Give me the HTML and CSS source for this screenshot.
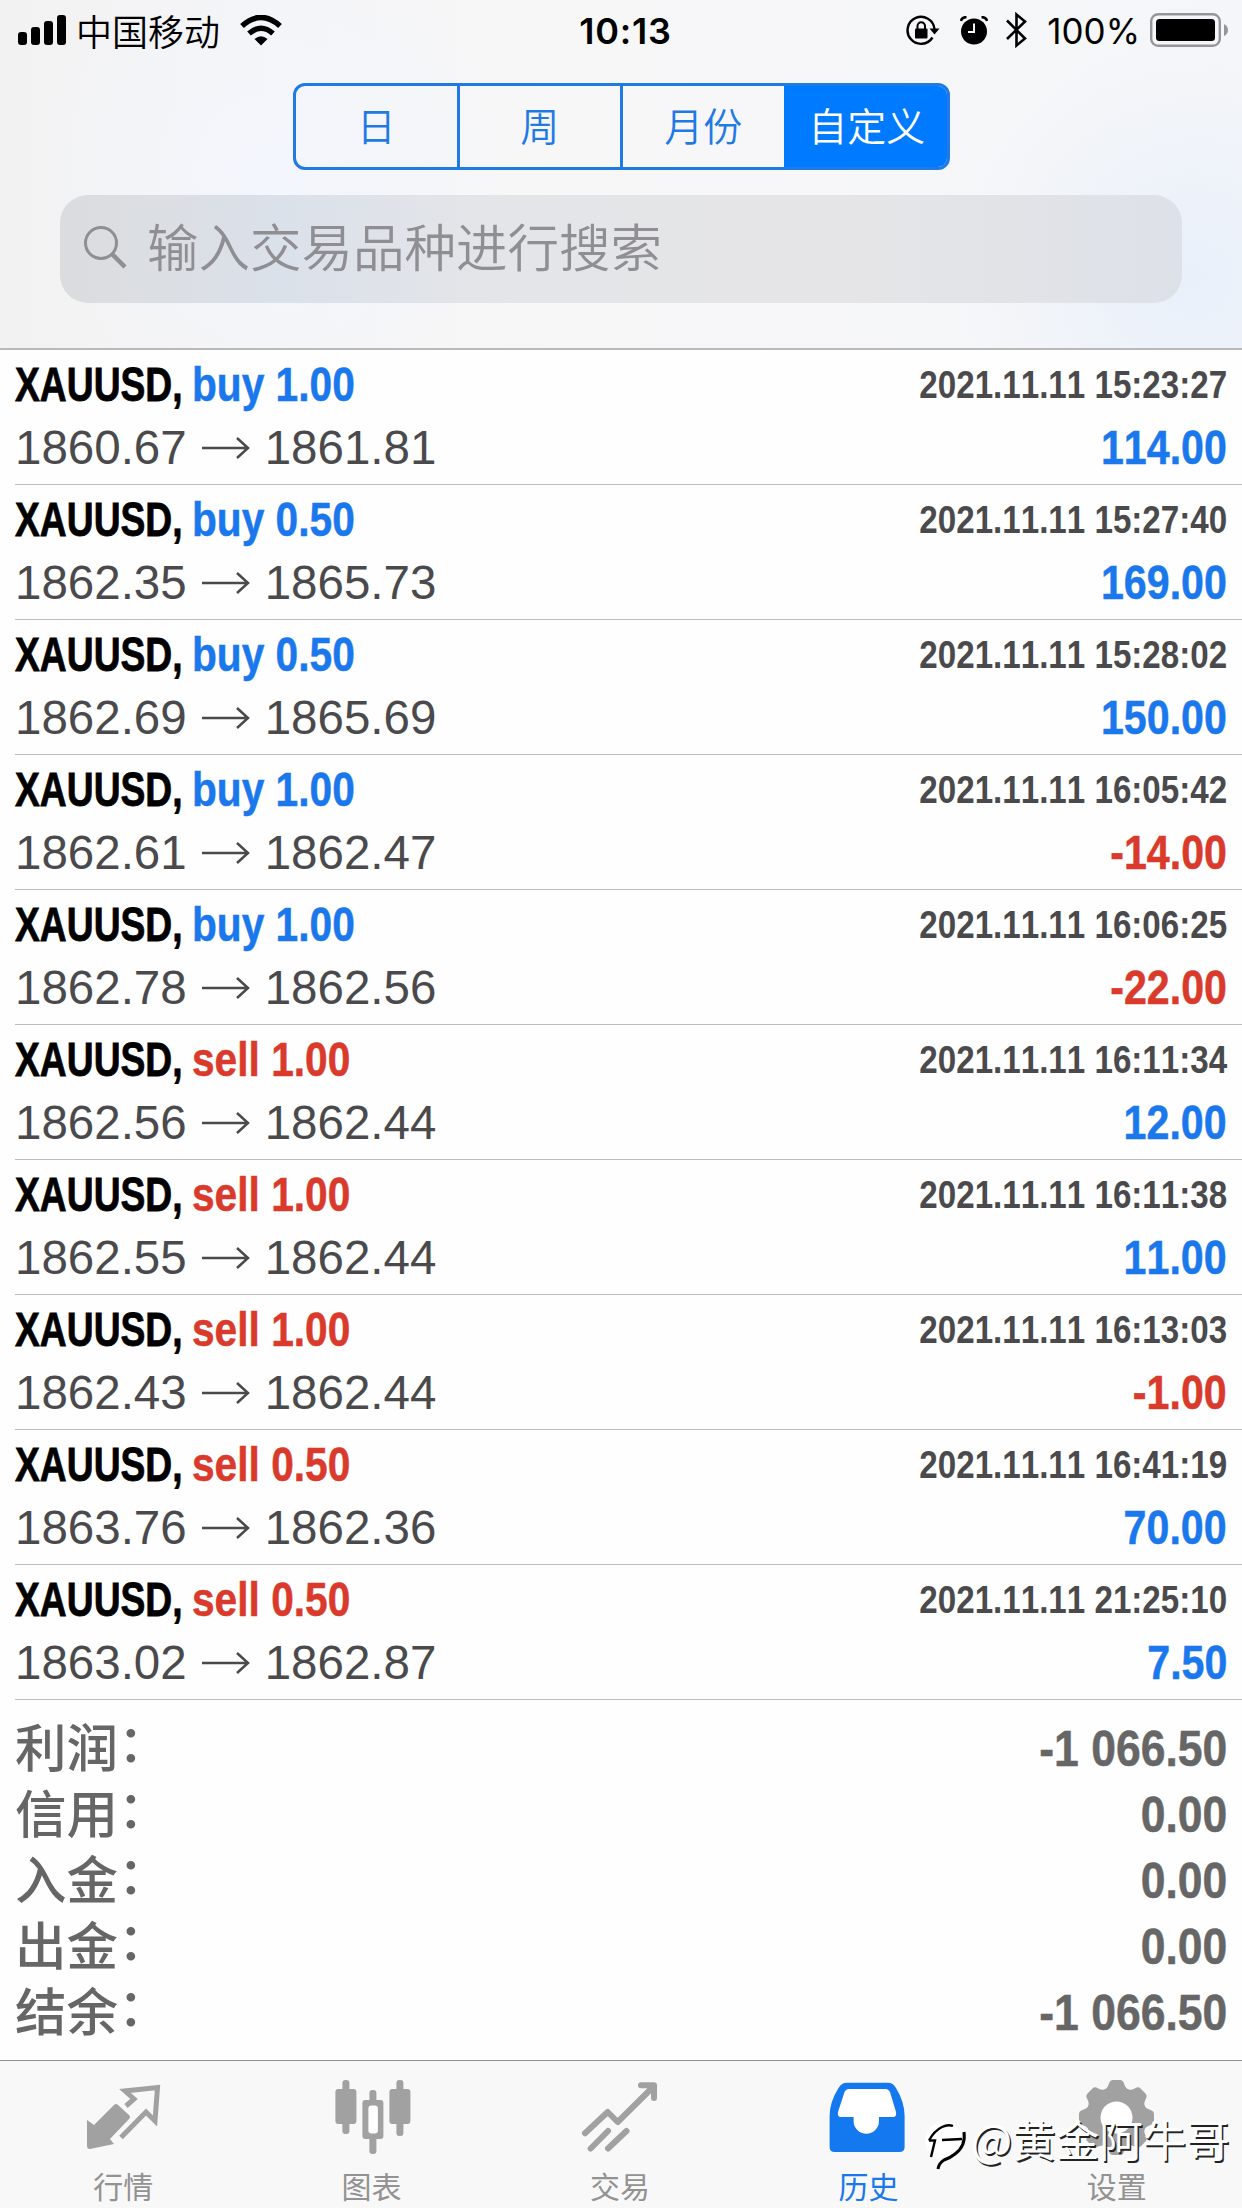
FILE: index.html
```
<!DOCTYPE html>
<html lang="zh-CN">
<head>
    <meta charset="UTF-8">
    <meta name="viewport" content="width=device-width, initial-scale=1.0">
    <title>历史</title>
    <link rel="stylesheet" href="styles.css">
</head>
<body>

<div class="header">
    <div class="status-bar">
        <div class="status-left">
            <svg class="signal" width="48" height="30" viewBox="0 0 48 30">
                <rect x="0" y="17" width="9" height="13" rx="3"/>
                <rect x="13" y="12" width="9" height="18" rx="3"/>
                <rect x="26" y="6" width="9" height="24" rx="3"/>
                <rect x="39" y="0" width="9" height="30" rx="3"/>
            </svg>
            <span class="carrier">中国移动</span>
            <svg class="wifi" width="42" height="31" viewBox="0 0 42 31">
                <path d="M2 11 Q21 -6 40 11" fill="none" stroke="#000" stroke-width="5.5"/>
                <path d="M9 18.5 Q21 8 33 18.5" fill="none" stroke="#000" stroke-width="5.5"/>
                <path d="M14.5 24 Q21 18.5 27.5 24 L21 30.5 Z"/>
            </svg>
        </div>
        <div class="clock">10:13</div>
        <div class="status-right">
            <svg class="lock" width="34" height="31" viewBox="0 0 34 31">
                <path d="M26.5 22.5 A13.5 13.5 0 1 1 28.5 14" fill="none" stroke="#000" stroke-width="2.4"/>
                <path d="M23.5 13.5 H33.5 L28.5 19.5 Z"/>
                <rect x="9" y="13.5" width="12.5" height="10" rx="1"/>
                <path d="M11.5 14 V11 A3.7 3.7 0 0 1 19 11 V14" fill="none" stroke="#000" stroke-width="2"/>
            </svg>
            <svg class="alarm" width="28" height="29" viewBox="0 0 28 29">
                <circle cx="14" cy="15.5" r="13"/>
                <path d="M1 5 Q2 1 6.5 1.2 M27 5 Q26 1 21.5 1.2" fill="none" stroke="#000" stroke-width="2.6"/>
                <path d="M14 7.5 V16 H8" fill="none" stroke="#f7f7f8" stroke-width="2"/>
            </svg>
            <svg class="bluetooth" width="22" height="36" viewBox="0 0 22 36">
                <path d="M1 8.5 L19 26.5 L10.5 33.5 V2.5 L19 9.5 L1 27" fill="none" stroke="#000" stroke-width="2.6"/>
            </svg>
            <span class="percent">100%</span>
            <svg class="battery" width="79" height="34" viewBox="0 0 79 34">
                <rect x="1.2" y="1.2" width="68.6" height="31.6" rx="7" fill="none" stroke="#96969a" stroke-width="2.4"/>
                <rect x="6" y="6" width="59" height="22" rx="3.5"/>
                <path d="M74 11 Q78 13 78 17 T74 23 Z" fill="#96969a"/>
            </svg>
        </div>
    </div>

    <div class="segments">
        <div class="segment">日</div>
        <div class="segment">周</div>
        <div class="segment">月份</div>
        <div class="segment active">自定义</div>
    </div>

    <div class="search">
        <svg width="44" height="44" viewBox="0 0 44 44" fill="none" stroke="#8e8e93">
            <circle cx="17" cy="17" r="15.5" stroke-width="3"/>
            <path d="M28.5 28.5 L41 41" stroke-width="4.5"/>
        </svg>
        <span>输入交易品种进行搜索</span>
    </div>
</div>

<div class="deals">
    <div class="deal">
        <div class="line"><span class="symbol">XAUUSD,</span><span class="type blue">buy 1.00</span><span class="date">2021.11.11 15:23:27</span></div>
        <div class="line"><span class="price">1860.67</span><svg class="arrow" viewBox="0 0 48 22"><path d="M0 11 H45 M35 1 L46 11 L35 21"/></svg><span class="price">1861.81</span><span class="profit blue">114.00</span></div>
    </div>
    <div class="deal">
        <div class="line"><span class="symbol">XAUUSD,</span><span class="type blue">buy 0.50</span><span class="date">2021.11.11 15:27:40</span></div>
        <div class="line"><span class="price">1862.35</span><svg class="arrow" viewBox="0 0 48 22"><path d="M0 11 H45 M35 1 L46 11 L35 21"/></svg><span class="price">1865.73</span><span class="profit blue">169.00</span></div>
    </div>
    <div class="deal">
        <div class="line"><span class="symbol">XAUUSD,</span><span class="type blue">buy 0.50</span><span class="date">2021.11.11 15:28:02</span></div>
        <div class="line"><span class="price">1862.69</span><svg class="arrow" viewBox="0 0 48 22"><path d="M0 11 H45 M35 1 L46 11 L35 21"/></svg><span class="price">1865.69</span><span class="profit blue">150.00</span></div>
    </div>
    <div class="deal">
        <div class="line"><span class="symbol">XAUUSD,</span><span class="type blue">buy 1.00</span><span class="date">2021.11.11 16:05:42</span></div>
        <div class="line"><span class="price">1862.61</span><svg class="arrow" viewBox="0 0 48 22"><path d="M0 11 H45 M35 1 L46 11 L35 21"/></svg><span class="price">1862.47</span><span class="profit red">-14.00</span></div>
    </div>
    <div class="deal">
        <div class="line"><span class="symbol">XAUUSD,</span><span class="type blue">buy 1.00</span><span class="date">2021.11.11 16:06:25</span></div>
        <div class="line"><span class="price">1862.78</span><svg class="arrow" viewBox="0 0 48 22"><path d="M0 11 H45 M35 1 L46 11 L35 21"/></svg><span class="price">1862.56</span><span class="profit red">-22.00</span></div>
    </div>
    <div class="deal">
        <div class="line"><span class="symbol">XAUUSD,</span><span class="type red">sell 1.00</span><span class="date">2021.11.11 16:11:34</span></div>
        <div class="line"><span class="price">1862.56</span><svg class="arrow" viewBox="0 0 48 22"><path d="M0 11 H45 M35 1 L46 11 L35 21"/></svg><span class="price">1862.44</span><span class="profit blue">12.00</span></div>
    </div>
    <div class="deal">
        <div class="line"><span class="symbol">XAUUSD,</span><span class="type red">sell 1.00</span><span class="date">2021.11.11 16:11:38</span></div>
        <div class="line"><span class="price">1862.55</span><svg class="arrow" viewBox="0 0 48 22"><path d="M0 11 H45 M35 1 L46 11 L35 21"/></svg><span class="price">1862.44</span><span class="profit blue">11.00</span></div>
    </div>
    <div class="deal">
        <div class="line"><span class="symbol">XAUUSD,</span><span class="type red">sell 1.00</span><span class="date">2021.11.11 16:13:03</span></div>
        <div class="line"><span class="price">1862.43</span><svg class="arrow" viewBox="0 0 48 22"><path d="M0 11 H45 M35 1 L46 11 L35 21"/></svg><span class="price">1862.44</span><span class="profit red">-1.00</span></div>
    </div>
    <div class="deal">
        <div class="line"><span class="symbol">XAUUSD,</span><span class="type red">sell 0.50</span><span class="date">2021.11.11 16:41:19</span></div>
        <div class="line"><span class="price">1863.76</span><svg class="arrow" viewBox="0 0 48 22"><path d="M0 11 H45 M35 1 L46 11 L35 21"/></svg><span class="price">1862.36</span><span class="profit blue">70.00</span></div>
    </div>
    <div class="deal">
        <div class="line"><span class="symbol">XAUUSD,</span><span class="type red">sell 0.50</span><span class="date">2021.11.11 21:25:10</span></div>
        <div class="line"><span class="price">1863.02</span><svg class="arrow" viewBox="0 0 48 22"><path d="M0 11 H45 M35 1 L46 11 L35 21"/></svg><span class="price">1862.87</span><span class="profit blue">7.50</span></div>
    </div>
</div>

<div class="summary">
    <div class="total"><span class="label">利润</span><span class="colon">：</span><span class="value">-1 066.50</span></div>
    <div class="total"><span class="label">信用</span><span class="colon">：</span><span class="value">0.00</span></div>
    <div class="total"><span class="label">入金</span><span class="colon">：</span><span class="value">0.00</span></div>
    <div class="total"><span class="label">出金</span><span class="colon">：</span><span class="value">0.00</span></div>
    <div class="total"><span class="label">结余</span><span class="colon">：</span><span class="value">-1 066.50</span></div>
</div>

<div class="tab-bar">
    <div class="tab">
        <svg width="80" height="80" viewBox="0 0 80 80">
            <path d="M3 42 L10 47 L30 27 Q32 25 34 27 L45 37 Q47 39 45 41 L26 61 L30 66 L6 71 Q3 71 3 68 Z"/>
            <path d="M42 28 L50 21 L41 13 L73.5 9.5 L71 43 L62 34 L37 59.5" fill="none" stroke="#a1a1a1" stroke-width="5"/>
        </svg>
        <span>行情</span>
    </div>
    <div class="tab">
        <svg width="80" height="80" viewBox="0 0 80 80">
            <rect x="9.4" y="2" width="7" height="54" rx="3"/>
            <rect x="2.4" y="11" width="21" height="35" rx="3"/>
            <rect x="36.4" y="12" width="7" height="64" rx="3"/>
            <rect x="29.4" y="22" width="21" height="39" rx="3"/>
            <rect x="35.4" y="27.5" width="9.5" height="28" rx="3" fill="#fff"/>
            <rect x="63.4" y="2" width="7" height="56" rx="3"/>
            <rect x="56.4" y="11" width="21" height="35" rx="3"/>
        </svg>
        <span>图表</span>
    </div>
    <div class="tab">
        <svg width="80" height="80" viewBox="0 0 80 80">
            <g fill="none" stroke="#a1a1a1" stroke-width="6" stroke-linecap="round" stroke-linejoin="round">
                <path d="M4 55.3 L26.7 34 L36.7 44 L73 8 M60 7.3 H73 V20"/>
                <path d="M9.7 70.5 L27 53 M27 70.5 L45.5 53"/>
            </g>
        </svg>
        <span>交易</span>
    </div>
    <div class="tab active">
        <svg width="80" height="80" viewBox="0 0 80 80">
            <path d="M18 4.7 H59 Q64 4.7 67 10 Q75.6 24 75.6 38 V69 Q75.6 74 70.6 74 H5.6 Q.6 74 .6 69 V38 Q.6 24 9.500 10 Q12.500 4.700 18 4.700 Z"/>
            <path d="M20 11 H56.5 Q59.5 11 61 14 L67 34 Q68 39 64 39 H50 V43 A12.7 12.7 0 0 1 24.6 43 V39 H12 Q8 39 9 34 L15.5 14 Q17 11 20 11 Z" fill="#fff"/>
        </svg>
        <span>历史</span>
    </div>
    <div class="tab">
        <svg width="80" height="80" viewBox="0 0 80 80">
            <g transform="translate(38.5 39.5)">
                <circle r="30.5"/>
                <path id="tooth" d="M-13 -27 Q-9 -29 -7.5 -34 Q-6.5 -37.500 -3.500 -37.500 H3.500 Q6.500 -37.500 7.500 -34 Q9 -29 13 -27 Z"/>
                <use href="#tooth" transform="rotate(45)"/>
                <use href="#tooth" transform="rotate(90)"/>
                <use href="#tooth" transform="rotate(135)"/>
                <use href="#tooth" transform="rotate(180)"/>
                <use href="#tooth" transform="rotate(225)"/>
                <use href="#tooth" transform="rotate(270)"/>
                <use href="#tooth" transform="rotate(315)"/>
                <circle r="16" fill="#fff"/>
            </g>
        </svg>
        <span>设置</span>
    </div>
</div>

<div class="watermark">
    <svg width="46" height="52" viewBox="0 0 46 52">
        <circle cx="22" cy="21" r="19" fill="#fff"/>
        <path d="M7 20.5 Q12 11 20 7 Q26 4 31 6 M7 20.5 H13 L9 37 M20 20 L40 19" fill="none" stroke="#000" stroke-width="2.4"/>
        <path d="M42 12 Q44 26 33 34 Q28 38 22 40 Q17 43 16 49" fill="none" stroke="#000" stroke-width="3"/>
    </svg>
    <span>@黄金阿牛哥</span>
</div>

</body>
</html>
```

FILE: styles.css
```
* {
    box-sizing: border-box;
}

body {
    margin: 0;
    width: 1242px;
    height: 2208px;
    background-color: #fefefe;
    font-family: "Liberation Sans", "Noto Sans CJK SC", sans-serif;
    display: flex;
    flex-direction: column;
    overflow: hidden;
    position: relative;
}

svg {
    display: block;
    flex: none;
}

.header {
    height: 350px;
    border-bottom: 2px solid #b9b9bc;
    background: radial-gradient(circle at 96% 80%, #e9f0fa 0, rgba(233, 240, 250, 0) 240px),
                radial-gradient(circle at 22% 50%, #f3f6fd 0, rgba(243, 246, 253, 0) 240px),
                linear-gradient(90deg, #f2f2f3, #f7f7f8 45%, #f5f6f9);
}

/* Status bar */
.status-bar {
    height: 83px;
    display: grid;
    grid-template-columns: 1fr auto 1fr;
    align-items: start;
    padding: 0 13px 0 18px;
}

.status-left,
.status-right {
    display: flex;
    align-items: center;
    height: 60px;
}

.status-right {
    justify-content: flex-end;
}

.carrier {
    font-family: "Noto Sans CJK SC", sans-serif;
    font-size: 36px;
    font-weight: 350;
    margin: 0 20px 0 10px;
}

.clock {
    font-family: Inter, sans-serif;
    font-size: 36px;
    font-weight: 600;
    line-height: 62px;
    letter-spacing: 0.8px;
    padding-left: 4px;
}

.percent {
    font-family: Inter, sans-serif;
    font-size: 35px;
    line-height: 62px;
    margin: 2px 10px 0 19px;
}

.alarm {
    margin: 0 18px 0 20px;
}

/* Period switch */
.segments {
    display: flex;
    width: 657px;
    height: 87px;
    margin: 0 0 0 293px;
    border: 3px solid #1f7ae4;
    border-radius: 12px;
    overflow: hidden;
}

.segment {
    flex: 1;
    display: flex;
    align-items: center;
    justify-content: center;
    padding-bottom: 6px;
    border-left: 3px solid #1f7ae4;
    color: #1f7ae4;
    font-size: 39px;
    font-weight: 350;
    font-family: "Noto Sans CJK SC", sans-serif;
}

.segment:first-child {
    border-left: none;
}

.segment.active {
    background-color: #007aff;
    border-color: #007aff;
    color: #fff;
}

.search {
    display: flex;
    align-items: center;
    gap: 19px;
    width: 1122px;
    height: 108px;
    margin: 25px 0 0 60px;
    padding-left: 24px;
    border-radius: 28px;
    background: linear-gradient(90deg, #dbdcde, #dbe1ea 20%, #e4e5e8 40%, #e5e5e7 70%, #dde1e8);
    color: #8e8e93;
    font-size: 51.5px;
    font-weight: 350;
    font-family: "Noto Sans CJK SC", sans-serif;
}

.search span {
    margin-bottom: 10px;
}

.search svg {
    margin-bottom: 2px;
}

/* Deals */
.deal {
    height: 135px;
    margin-left: 15px;
    padding: 3px 15px 0 0;
    border-bottom: 1px solid #bcbcbe;
}

.line {
    display: flex;
    align-items: center;
    height: 63px;
    font-size: 49px;
    line-height: 63px;
    white-space: nowrap;
    font-kerning: none;
}

.symbol,
.type,
.date,
.profit,
.value {
    font-weight: bold;
    transform-origin: left center;
}

.symbol {
    width: 177px;
    color: #000;
    transform: scaleX(0.76);
    -webkit-text-stroke: 0.8px;
}

.type {
    transform: scaleX(0.83);
    -webkit-text-stroke: 0.5px;
}

.date {
    margin-left: auto;
    color: #4a4a4d;
    font-size: 39px;
    transform: scaleX(0.85);
    transform-origin: right center;
}

.price {
    color: #4a4a4d;
    font-size: 47.5px;
}

.arrow {
    width: 48px;
    height: 22px;
    margin: 0 15px;
    fill: none;
    stroke: #4a4a4d;
    stroke-width: 2.5;
}

.profit {
    margin-left: auto;
    transform: scaleX(0.84);
    transform-origin: right center;
    -webkit-text-stroke: 0.5px;
}

.blue {
    color: #1a78ec;
}

.red {
    color: #d93a2b;
}

/* Totals */
.summary {
    flex: 1;
    padding: 14px 15px 0 15px;
    color: #666;
}

.total {
    display: flex;
    height: 66px;
    line-height: 66px;
}

.label,
.colon {
    margin-top: -2px;
    font-family: "Noto Sans CJK SC", sans-serif;
    font-size: 51.5px;
    font-weight: 500;
}

.colon {
    margin-top: -7px;
}

.value {
    margin: 2px 0 0 auto;
    font-size: 50px;
    transform: scaleX(0.89);
    transform-origin: right center;
    -webkit-text-stroke: 0.5px;
}

/* Tabs */
.tab-bar {
    display: flex;
    height: 148px;
    border-top: 1px solid #919191;
    background-color: #f8f8f8;
}

.tab {
    flex: 1;
    display: flex;
    flex-direction: column;
    align-items: center;
    padding-top: 17px;
    color: #929292;
    fill: #a1a1a1;
    font-family: "Noto Sans CJK SC", sans-serif;
    font-size: 30px;
    line-height: 40px;
}

.tab span {
    margin: 7px 2px 0 0;
}

.tab.active {
    color: #1a78ec;
    fill: #1478ee;
}

.watermark {
    position: absolute;
    left: 922px;
    top: 2117px;
    display: flex;
    align-items: center;
    gap: 3px;
    color: #fff;
    font-family: "Noto Sans CJK SC", sans-serif;
    font-size: 43.5px;
    line-height: 44px;
    text-shadow: 1.5px 1.5px 0 #222;
    white-space: nowrap;
}

.watermark span {
    margin-bottom: 14px;
}
```
